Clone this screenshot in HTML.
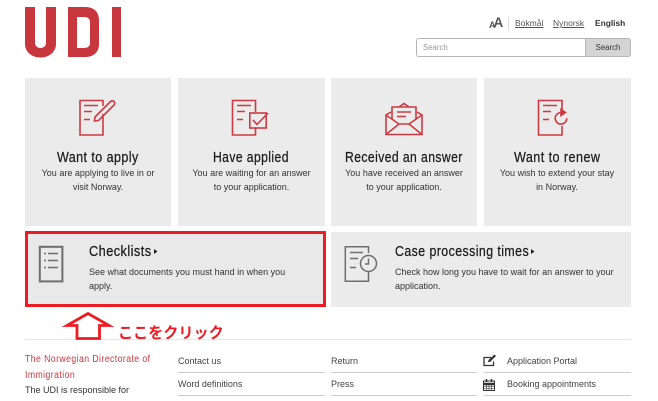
<!DOCTYPE html>
<html><head><meta charset="utf-8"><style>
html,body{margin:0;padding:0;background:#fff}
body{position:relative;width:658px;height:401px;overflow:hidden;font-family:"Liberation Sans",sans-serif;color:#333}
.a{position:absolute;white-space:nowrap}
.card{position:absolute;background:#ebebeb}
.h{position:absolute;white-space:nowrap;font-size:14.5px;line-height:18px;color:#1c1c1c;transform-origin:left top;letter-spacing:.5px;-webkit-text-stroke:.25px #1c1c1c}
.c{text-align:center;font-size:9px;line-height:14px;color:#333;position:absolute;white-space:nowrap}
.t{position:absolute;white-space:nowrap;font-size:9px;line-height:14px;color:#444}
.l{position:absolute;height:1px;background:#ccc}
.r{position:absolute;white-space:nowrap;left:25px;font-size:10px;line-height:17px;color:#c8363e;letter-spacing:.5px;transform-origin:left top;transform:scaleX(.868)}
svg{position:absolute;overflow:visible}
</style></head><body>

<svg style="left:0;top:0" width="130" height="60" viewBox="0 0 130 60">
<path fill="#c8363e" d="M25 7h10v36c0 3 2.500 5 5.500 5s5.500-2 5.500-5V7h10v37c0 8-7 13.500-15.500 13.500S25 52 25 44z"/>
<path fill="#c8363e" fill-rule="evenodd" d="M68 7h17c9 0 14 5 14 13v24c0 8-5 13-14 13H68zM77 17v31h7c4 0 6-2 6-5V22c0-3-2-5-6-5z"/>
<rect x="112" y="7" width="9" height="50" fill="#c8363e"/>
</svg>

<div class="a" style="left:489px;top:18px;font-size:9px;font-weight:bold;color:#555;line-height:14px">A</div>
<div class="a" style="left:493.500px;top:14px;font-size:13.500px;font-weight:bold;color:#555;line-height:18px">A</div>
<div class="a" style="left:508px;top:17px;width:1px;height:13px;background:#ddd"></div>
<div class="a" style="left:515px;top:16px;font-size:8.500px;line-height:14px;color:#555;text-decoration:underline">Bokmål</div>
<div class="a" style="left:553px;top:16px;font-size:8.500px;line-height:14px;color:#555;text-decoration:underline">Nynorsk</div>
<div class="a" style="left:595px;top:16px;font-size:8.400px;line-height:14px;color:#333;font-weight:bold">English</div>

<div class="a" style="left:416px;top:38px;width:171px;height:19px;border:1px solid #b5b5b5;border-right:0;border-radius:3px 0 0 3px;background:#fff;box-sizing:border-box"></div>
<div class="a" style="left:423px;top:41px;font-size:7.800px;line-height:13px;color:#999">Search</div>
<div class="a" style="left:585px;top:38px;width:46px;height:19px;background:#d4d4d4;border:1px solid #b5b5b5;border-radius:0 3px 3px 0;box-sizing:border-box;text-align:center;font-size:7.800px;line-height:17px;color:#333">Search</div>

<div class="card" style="left:25px;top:78px;width:146px;height:148px"></div>
<div class="card" style="left:178px;top:78px;width:147px;height:148px"></div>
<div class="card" style="left:331px;top:78px;width:146px;height:148px"></div>
<div class="card" style="left:484px;top:78px;width:146.500px;height:148px"></div>
<div class="card" style="left:331px;top:232px;width:299.500px;height:75px"></div>
<div class="a" style="left:25px;top:231px;width:301px;height:75.500px;background:#e9e9e9;border:3px solid #ed1c24;box-sizing:border-box"></div>

<svg style="left:0;top:0" width="658" height="401" viewBox="0 0 658 401" fill="none" stroke="#cc3a42" stroke-width="1.600">
<path d="M103 114V135H80V100.500H103V106"/>
<path d="M84 105.500H98M84 111.500H92M84 119.500H90" stroke-width="1.600"/>
<path d="M95 117L110 102c1.500-1.500 3-1.500 4-.5s1 2.500-.5 4L98.500 120.500l-4 .5z"/>
<path d="M255.500 112V100.500H232.500V135H255.500V128"/>
<path d="M237 105.500H251M237 111.500H245M237 119.500H243" stroke-width="1.600"/>
<rect x="249.800" y="113" width="16.400" height="15"/>
<path d="M253 120l4 4.500 11-11.500"/>
<path d="M391 112L386 115V134.500H422V115L417 112M399 107L404 103.500L409 107"/>
<path d="M386 115L399 124H409L422 115M386 134.500L399 124M422 134.500L409 124"/>
<path d="M392 119V107H416V119"/>
<path d="M397 112H411M397 116.500H406" stroke-width="1.600"/>
<path d="M562 110V100.500H538.500V135H562V126"/>
<path d="M543 105.500H557M543 111.500H551M543 119.500H549" stroke-width="1.600"/>
<path d="M561 112.500a5.800 5.800 0 1 0 5.800 5.800"/>
<path d="M561 109.500l4.500 3-4.500 3z" fill="#cc3a42"/>
</svg>

<svg style="left:0;top:0" width="658" height="401" viewBox="0 0 658 401" fill="none" stroke="#6e6e6e" stroke-width="1.500">
<rect x="39.800" y="246.800" width="22.600" height="34.600" stroke-width="2"/>
<path d="M48 253.500H58M48 260.500H58M48 267.500H58" stroke-width="1.600"/>
<path d="M44 253.500H46M44 260.500H46M44 267.500H46"/>
<path d="M368.500 253V246.700H345.300V281.300H368.500V272"/>
<path d="M350 252.500H363M350 258.500H358M350 267.500H356" stroke-width="1.500"/>
<circle cx="368.500" cy="263.500" r="8"/>
<path d="M368.500 258.500V264H365"/>
</svg>

<div class="h" style="left:57px;top:149px;transform:scaleX(.863)">Want to apply</div>
<div class="h" style="left:213px;top:149px;transform:scaleX(.837)">Have applied</div>
<div class="h" style="left:345px;top:149px;transform:scaleX(.839)">Received an answer</div>
<div class="h" style="left:514px;top:149px;transform:scaleX(.869)">Want to renew</div>

<div class="c" style="left:25px;top:166px;width:146px">You are applying to live in or</div>
<div class="c" style="left:25px;top:180px;width:146px">visit Norway.</div>
<div class="c" style="left:178px;top:166px;width:147px">You are waiting for an answer</div>
<div class="c" style="left:178px;top:180px;width:147px">to your application.</div>
<div class="c" style="left:331px;top:166px;width:146px">You have received an answer</div>
<div class="c" style="left:331px;top:180px;width:146px">to your application.</div>
<div class="c" style="left:484px;top:166px;width:146px">You wish to extend your stay</div>
<div class="c" style="left:484px;top:180px;width:146px">in Norway.</div>

<div class="h" style="left:89px;top:243px;transform:scaleX(.88)">Checklists</div>
<svg style="left:0;top:0" width="658" height="401"><path d="M154 249l3.500 2.500-3.500 2.500z" fill="#222"/><path d="M531 249l3.500 2.500-3.500 2.500z" fill="#222"/></svg>
<div class="t" style="left:89px;top:265px;color:#333">See what documents you must hand in when you</div>
<div class="t" style="left:89px;top:279px;color:#333">apply.</div>
<div class="h" style="left:395px;top:243px;transform:scaleX(.853)">Case processing times</div>
<div class="t" style="left:395px;top:265px;color:#333">Check how long you have to wait for an answer to your</div>
<div class="t" style="left:395px;top:279px;color:#333">application.</div>

<div class="a" style="left:25px;top:339px;width:605.500px;height:1px;background:#e6e6e6"></div>

<svg style="left:0;top:0" width="658" height="401" viewBox="0 0 658 401" fill="none">
<path d="M77 338.500V325.500H67L88 313.500L109 325.500H99.500V338.500z" stroke="#ed1c24" stroke-width="2.800" fill="#fff"/>
</svg>
<div class="a" style="left:118px;top:324px;font-size:15.100px;line-height:20px;font-weight:bold;color:#ed1c24;font-family:'Liberation Sans','Noto Sans CJK JP',sans-serif">ここをクリック</div>

<div class="r" style="top:351px">The Norwegian Directorate of</div>
<div class="r" style="top:367px">Immigration</div>
<div class="t" style="left:25px;top:383px;color:#333">The UDI is responsible for</div>

<div class="t" style="left:178px;top:354px">Contact us</div>
<div class="l" style="left:178px;top:372px;width:147px"></div>
<div class="t" style="left:178px;top:377px">Word definitions</div>
<div class="l" style="left:178px;top:395px;width:147px"></div>
<div class="t" style="left:331px;top:354px">Return</div>
<div class="l" style="left:331px;top:372px;width:146px"></div>
<div class="t" style="left:331px;top:377px">Press</div>
<div class="l" style="left:331px;top:395px;width:146px"></div>
<div class="t" style="left:507px;top:354px">Application Portal</div>
<div class="l" style="left:484px;top:372px;width:146.500px"></div>
<div class="t" style="left:507px;top:377px">Booking appointments</div>
<div class="l" style="left:484px;top:395px;width:146.500px"></div>

<svg style="left:0;top:0" width="658" height="401" viewBox="0 0 658 401" fill="none" stroke="#333">
<path d="M493.500 361.500V365.500H484V357.500H491" stroke-width="1.300"/>
<path d="M488 362l.500-2 6-5.500 1.500 1.500-6 6z" fill="#333" stroke="none"/>
<rect x="483.500" y="381" width="11" height="9.500" stroke-width="1"/>
<path d="M483.500 384H494.500" stroke-width="2.500"/>
<path d="M483.500 386.500H494.500M483.500 388.500H494.500M486.500 384V390M489 384V390M491.500 384V390" stroke-width=".6"/>
<path d="M486.500 379V382M491.500 379V382" stroke-width="1.500"/>
</svg>
</body></html>
